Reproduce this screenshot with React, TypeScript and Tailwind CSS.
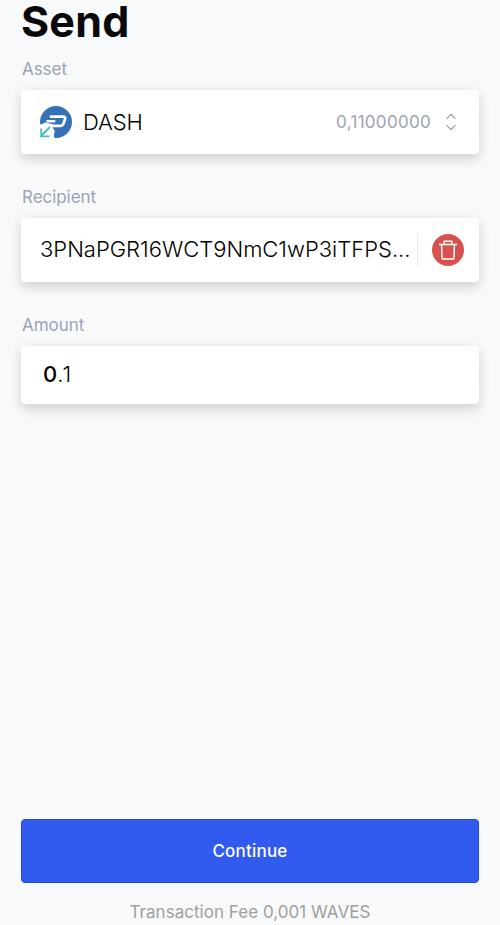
import type { ReactNode } from "react";

function Label({ children }: { children: ReactNode }) {
  return <div className="h-6 pl-px text-[17px] leading-6 tracking-[-0.05px] text-[#9ba4b3]">{children}</div>;
}

const card =
  "flex items-center rounded bg-white shadow-[0_6px_12px_rgba(0,0,0,0.13),0_0_14px_rgba(0,0,0,0.05)]";

function DashLogo() {
  return (
    <svg className="size-9 shrink-0" viewBox="0 0 36 36" fill="none">
      <circle cx="18" cy="18" r="16" fill="#3671b7" />
      <path d="M11.8 12.7H25.3Q27.8 12.7 27 15L25.6 19.3Q24.8 21.8 22.2 21.8H14" stroke="#fff" strokeWidth="2.7" />
      <path d="M8.5 17.2H17.3" stroke="#fff" strokeWidth="2.5" />
      <path d="M0 20.4L4 20.2L7 18.5L15 20.2L14.8 24L16.8 27L16 30.5L16.3 34.5H0Z" fill="#fff" />
      <path d="M12 23L3.5 31.5M3.2 24.5V32.3H11.5" stroke="#49bbb6" strokeWidth="1.8" />
    </svg>
  );
}

export default function App() {
  return (
    <main className="flex h-[925px] w-[500px] flex-col overflow-hidden bg-[#f8f9fb] px-[21px] font-[Inter,sans-serif]">
      <h1 className="h-[42px] text-[43px] leading-[42px] font-bold tracking-[0.2px] text-[#090909]">Send</h1>
      <div className="mt-[15px]"><Label>Asset</Label></div>
      <section className={`${card} mt-[9px] h-16 w-[458px] pl-[17px] pr-[22px]`}>
        <DashLogo />
        <span className="ml-[9px] text-[22px] font-light tracking-[-0.1px] text-black">DASH</span>
        <span className="ml-auto pt-0.5 text-[17px] font-normal tracking-[0.3px] text-[#9ca4b3]">0,11000000</span>
        <svg className="ml-[14px] h-5 w-3" viewBox="0 0 12 20" fill="none" stroke="#929bad" strokeWidth="1.2">
          <path d="M1.5 6.8L6 2.3L10.5 6.8M1.5 13.2L6 17.7L10.5 13.2" />
        </svg>
      </section>
      <div className="mt-[31px]"><Label>Recipient</Label></div>
      <section className={`${card} mt-[9px] h-16 w-[458px] pl-[19px] pr-[15px]`}>
        <span className="w-[377px] shrink-0 whitespace-nowrap pb-0.5 text-[22px] font-light text-black">3PNaPGR16WCT9NmC1wP3iTFPS...</span>
        <span className="h-8 w-px bg-[#e5e6e8]" />
        <button aria-label="Clear recipient" className="ml-auto flex size-8 items-center justify-center rounded-full bg-[#d7514f]">
          <svg className="size-8" viewBox="0 0 32 32" fill="none" stroke="#fff" strokeWidth="1.5">
            <path d="M7 10.5H25M11.8 10.5L12.3 7.2H19.7L20.2 10.5M9.6 11L10 24Q10 25 11 25H21Q22 25 22 24L22.4 11" />
          </svg>
        </button>
      </section>
      <div className="mt-[30.5px]"><Label>Amount</Label></div>
      <section className={`${card} mt-[9px] h-[58.5px] w-[458px] pb-px pl-[22px]`}>
        <span className="text-[22px] text-black"><span className="font-medium">0</span><span className="font-light tracking-[1px]">.1</span></span>
      </section>
      <button className="mt-auto h-16 w-[458px] shrink-0 rounded border border-[#2049e0] bg-[#305bee] pt-px text-[17px] font-medium tracking-[0.2px] text-white">Continue</button>
      <footer className="mt-4 h-[26px] shrink-0 text-center text-[17px] leading-[26px] tracking-[0.03px] text-[#a0a0a0]">Transaction Fee 0,001 WAVES</footer>
    </main>
  );
}
